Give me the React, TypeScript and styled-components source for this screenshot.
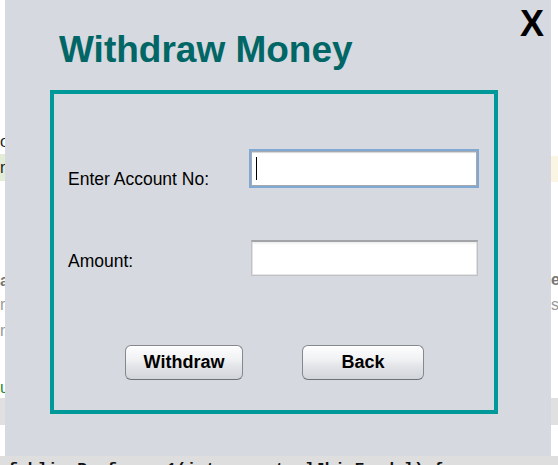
import styled, { createGlobalStyle } from 'styled-components';

const Global = createGlobalStyle`
  html, body {
    margin: 0;
    padding: 0;
    background: #ffffff;
    overflow: hidden;
  }
  * { box-sizing: border-box; }
`;

const Page = styled.div`
  width: 558px;
  height: 465px;
  display: flex;
  flex-direction: column;
  font-family: "Liberation Sans", Arial, sans-serif;
`;

const Top = styled.div`
  display: flex;
  height: 456px;
`;

const Gutter = styled.div<{ $w: number; $align: 'left' | 'right' }>`
  width: ${(p) => p.$w}px;
  flex: none;
  display: flex;
  flex-direction: column;
  overflow: hidden;
  text-align: ${(p) => p.$align};
`;

const GutterRow = styled.div<{ $h: number; $bg?: string; $color?: string; $bold?: boolean }>`
  height: ${(p) => p.$h}px;
  flex: none;
  background: ${(p) => p.$bg || 'transparent'};
  color: ${(p) => p.$color || '#222'};
  font-weight: ${(p) => (p.$bold ? 700 : 400)};
  font-size: 16px;
  line-height: ${(p) => p.$h}px;
  white-space: nowrap;
  overflow: hidden;
`;

const BottomStrip = styled.div`
  height: 9px;
  background: #dedede;
  padding: 5px 0 0 8px;
  font-family: "Liberation Mono", monospace;
  font-weight: 700;
  font-size: 16.5px;
  line-height: 18px;
  color: #111;
  white-space: nowrap;
  overflow: hidden;
`;

const Dialog = styled.div`
  width: 546px;
  flex: none;
  background: #d6d9df;
  display: flex;
  flex-direction: column;
`;

const Header = styled.div`
  height: 90px;
  display: flex;
  justify-content: space-between;
  align-items: flex-start;
  padding: 0 7px 0 54px;
`;

const Title = styled.h1`
  margin: 29px 0 0;
  font-size: 37px;
  line-height: 42px;
  font-weight: 700;
  color: #006666;
`;

const CloseX = styled.div`
  margin-top: 3px;
  font-size: 36px;
  line-height: 41px;
  font-weight: 700;
  color: #000;
`;

const FormBox = styled.div`
  margin-left: 45px;
  width: 448px;
  height: 324px;
  border: 4px solid #009999;
  padding-top: 55px;
  display: flex;
  flex-direction: column;
`;

const Row = styled.div<{ $top?: number }>`
  display: flex;
  align-items: flex-start;
  padding-left: 14px;
  margin-top: ${(p) => p.$top || 0}px;
`;

const Label = styled.label<{ $w: number; $top: number }>`
  width: ${(p) => p.$w}px;
  flex: none;
  margin-top: ${(p) => p.$top}px;
  font-size: 17.5px;
  line-height: 20px;
  color: #000;
`;

const TextField = styled.div<{ $w: number; $h: number; $focused?: boolean }>`
  width: ${(p) => p.$w}px;
  height: ${(p) => p.$h}px;
  flex: none;
  display: flex;
  align-items: center;
  padding-left: ${(p) => (p.$focused ? 5 : 6)}px;
  background: linear-gradient(#ececec 0, #ffffff 3px, #ffffff 100%);
  ${(p) =>
    p.$focused
      ? `
    border: 2px solid #80a8d4;
    box-shadow: inset 0 0 0 1px #a6a9ae, inset 0 2px 0 #d9d9d9;
  `
      : `
    border: 1px solid #bfc1c4;
    border-top: 2px solid #a2a4a7;
    box-shadow: inset 1px 0 0 #e2e2e2, inset -1px 0 0 #e2e2e2, inset 0 -1px 0 #e6e6e6;
  `}
`;

const Caret = styled.span`
  width: 1px;
  height: 23px;
  background: #000;
`;

const ButtonRow = styled.div`
  display: flex;
  gap: 59px;
  padding-left: 71px;
  margin-top: 69px;
`;

const Button = styled.button<{ $w: number }>`
  width: ${(p) => p.$w}px;
  height: 35px;
  padding: 0;
  border: 1px solid #85888d;
  border-bottom-color: #6f7277;
  border-radius: 6px;
  background: linear-gradient(#fdfdfe 0%, #f1f2f4 40%, #e3e5e9 60%, #d2d5db 100%);
  box-shadow: inset 0 1px 0 #ffffff;
  font-family: "Liberation Sans", Arial, sans-serif;
  font-size: 18px;
  font-weight: 700;
  color: #000;
  cursor: pointer;
`;

export default function App() {
  return (
    <>
      <Global />
      <Page>
        <Top>
          <Gutter $w={5} $align="right">
            <GutterRow $h={129} />
            <GutterRow $h={25}>o</GutterRow>
            <GutterRow $h={27} $bg="#e3ecd7">n</GutterRow>
            <GutterRow $h={88} />
            <GutterRow $h={23} $color="#777" $bold>a</GutterRow>
            <GutterRow $h={26} $color="#999">m</GutterRow>
            <GutterRow $h={26} $color="#999">n</GutterRow>
            <GutterRow $h={34} />
            <GutterRow $h={20} $color="#1a8a3a">u</GutterRow>
            <GutterRow $h={27} $bg="#e0e0e0" />
            <GutterRow $h={31} />
          </Gutter>

          <Dialog>
            <Header>
              <Title>Withdraw Money</Title>
              <CloseX>X</CloseX>
            </Header>
            <FormBox>
              <Row>
                <Label $w={181} $top={20}>Enter Account No:</Label>
                <TextField $w={230} $h={39} $focused>
                  <Caret />
                </TextField>
              </Row>
              <Row $top={51}>
                <Label $w={183} $top={11}>Amount:</Label>
                <TextField $w={227} $h={36} />
              </Row>
              <ButtonRow>
                <Button $w={118}>Withdraw</Button>
                <Button $w={122}>Back</Button>
              </ButtonRow>
            </FormBox>
          </Dialog>

          <Gutter $w={7} $align="left">
            <GutterRow $h={156} />
            <GutterRow $h={26} $bg="#fbf5e3" />
            <GutterRow $h={86} />
            <GutterRow $h={24} $color="#777" $bold>e</GutterRow>
            <GutterRow $h={26} $color="#999">s</GutterRow>
            <GutterRow $h={80} />
            <GutterRow $h={27} $bg="#e0e0e0" />
            <GutterRow $h={31} />
          </Gutter>
        </Top>
        <BottomStrip>fublic Professor1(int amount, lJbi Fund l) {"{"}</BottomStrip>
      </Page>
    </>
  );
}
